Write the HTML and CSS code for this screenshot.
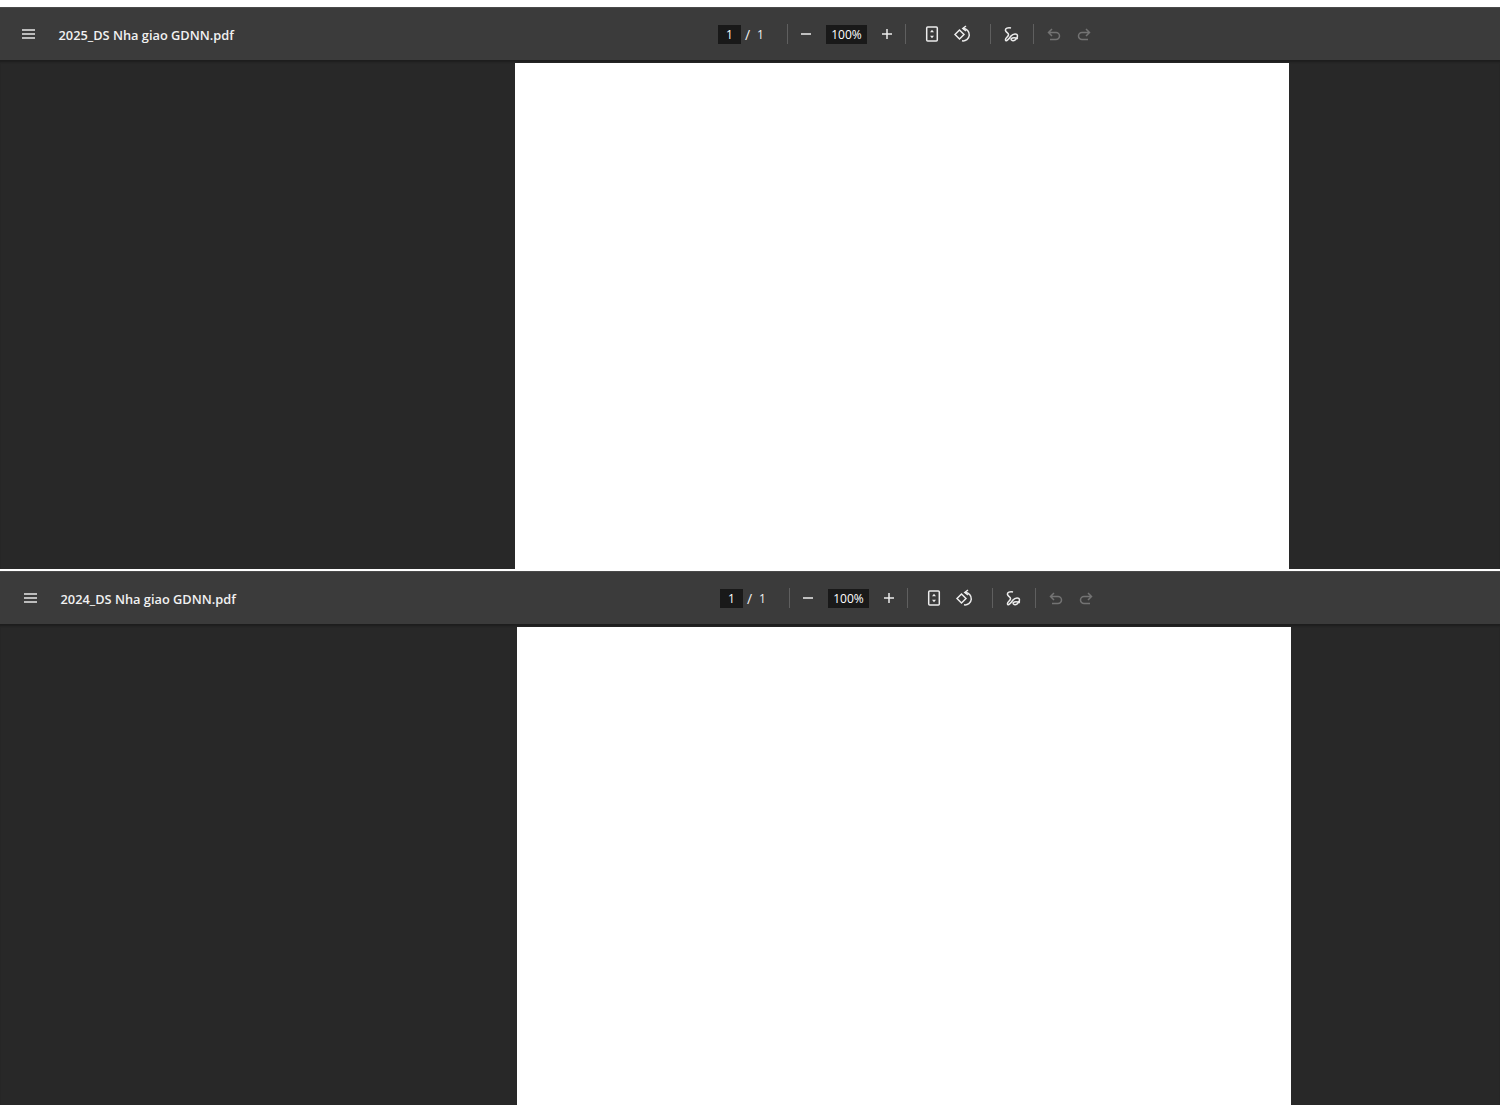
FILE: index.html
```html
<!DOCTYPE html>
<html lang="en">
<head>
    <meta charset="UTF-8">
    <title>PDF viewers</title>
    <link rel="stylesheet" href="styles.css">
</head>
<body>
    <!-- First document -->
    <section class="viewer viewer-first">
        <div class="toolbar">
            <div class="toolbar-left">
                <svg class="menu-icon" viewBox="0 0 14 10" preserveAspectRatio="none"><path d="M0 1h14M0 5h14M0 9h14"/></svg>
                <span class="doc-title">2025_DS Nha giao GDNN.pdf</span>
            </div>
            <div class="toolbar-center">
                <span class="num-box page-box">1</span>
                <span class="slash">/</span>
                <span class="page-total">1</span>
                <span class="sep sep-page"></span>
                <svg class="icon icon-minus" viewBox="0 0 20 20"><path d="M5 10h10"/></svg>
                <span class="num-box zoom-box">100%</span>
                <svg class="icon icon-plus" viewBox="0 0 20 20"><path d="M5 10h10M10 5v10"/></svg>
                <span class="sep sep-zoom"></span>
                <svg class="icon icon-fit" viewBox="0 0 20 20"><rect x="4.700" y="3" width="10.600" height="14" rx="1"/><path class="fill" d="M10 5.800l2 2.400H8zM10 14.200l-2-2.400h4z"/></svg>
                <svg class="icon icon-rotate" viewBox="0 0 20 20"><path d="M6.500 6L11 10.500 6.500 15 2 10.500z"/><path d="M10 4.500a6.200 6.200 0 1 1-1 12.300"/><path d="M13 2L9.800 4.500 13 7"/></svg>
                <span class="sep sep-rotate"></span>
                <svg class="icon icon-draw" viewBox="0 0 20 20"><path d="M11 4C8 3 5 4.500 5.500 6.500 6 8.500 9 9 8.500 11 8 13 5 14 5.500 16 6 18 9 15 11 12c2-2.500 6.500-3 6.500 0 0 3-4 6-6 4-1.500-2 2-3 6.500-1.500"/></svg>
                <span class="sep sep-draw"></span>
                <svg class="icon icon-undo" viewBox="0 0 20 20"><path d="M8 5L4.500 8.500 8 12M4.500 8.500H12a3.500 3.500 0 0 1 0 7H6"/></svg>
                <svg class="icon icon-redo" viewBox="0 0 20 20"><path d="M12 5l3.500 3.500L12 12M15.500 8.500H8a3.500 3.500 0 0 0 0 7h6"/></svg>
            </div>
        </div>
        <div class="stage"><div class="page"></div></div>
    </section>

    <!-- Second document -->
    <section class="viewer viewer-second">
        <div class="toolbar">
            <div class="toolbar-left">
                <svg class="menu-icon" viewBox="0 0 14 10" preserveAspectRatio="none"><path d="M0 1h14M0 5h14M0 9h14"/></svg>
                <span class="doc-title">2024_DS Nha giao GDNN.pdf</span>
            </div>
            <div class="toolbar-center">
                <span class="num-box page-box">1</span>
                <span class="slash">/</span>
                <span class="page-total">1</span>
                <span class="sep sep-page"></span>
                <svg class="icon icon-minus" viewBox="0 0 20 20"><path d="M5 10h10"/></svg>
                <span class="num-box zoom-box">100%</span>
                <svg class="icon icon-plus" viewBox="0 0 20 20"><path d="M5 10h10M10 5v10"/></svg>
                <span class="sep sep-zoom"></span>
                <svg class="icon icon-fit" viewBox="0 0 20 20"><rect x="4.700" y="3" width="10.600" height="14" rx="1"/><path class="fill" d="M10 5.800l2 2.400H8zM10 14.200l-2-2.400h4z"/></svg>
                <svg class="icon icon-rotate" viewBox="0 0 20 20"><path d="M6.500 6L11 10.500 6.500 15 2 10.500z"/><path d="M10 4.500a6.200 6.200 0 1 1-1 12.300"/><path d="M13 2L9.800 4.500 13 7"/></svg>
                <span class="sep sep-rotate"></span>
                <svg class="icon icon-draw" viewBox="0 0 20 20"><path d="M11 4C8 3 5 4.500 5.500 6.500 6 8.500 9 9 8.500 11 8 13 5 14 5.500 16 6 18 9 15 11 12c2-2.500 6.500-3 6.500 0 0 3-4 6-6 4-1.500-2 2-3 6.500-1.500"/></svg>
                <span class="sep sep-draw"></span>
                <svg class="icon icon-undo" viewBox="0 0 20 20"><path d="M8 5L4.500 8.500 8 12M4.500 8.500H12a3.500 3.500 0 0 1 0 7H6"/></svg>
                <svg class="icon icon-redo" viewBox="0 0 20 20"><path d="M12 5l3.500 3.500L12 12M15.500 8.500H8a3.500 3.500 0 0 0 0 7h6"/></svg>
            </div>
        </div>
        <div class="stage"><div class="page"></div></div>
    </section>
</body>
</html>
```

FILE: styles.css
```css
* {
    margin: 0;
    padding: 0;
    box-sizing: border-box;
}

body {
    width: 1500px;
    height: 1105px;
    padding-top: 7px;
    overflow: hidden;
    background-color: #fff;
    font-family: "Open Sans", "Noto Sans", sans-serif;
    color: #f1f1f1;
}

.viewer {
    display: flex;
    flex-direction: column;
    overflow: hidden;
}

.viewer-first {
    height: 562px;
    --shift: 0px;
}

.viewer-second {
    height: 534px;
    margin-top: 2px;
    --shift: 2px;
}

/* Toolbar */
.toolbar {
    flex: none;
    display: flex;
    align-items: center;
    height: 53px;
    padding-left: var(--shift);
    background-color: #3b3b3b;
    border-top: 1px solid #4a4a4a;
}

.toolbar-left {
    flex: none;
    display: flex;
    align-items: center;
    width: 718px;
    padding-left: 22px;
}

.menu-icon {
    width: 13px;
    height: 10px;
    margin-right: 23.5px;
    fill: none;
    stroke: #e8e8e8;
    stroke-width: 1.4;
}

.doc-title {
    margin-top: 1px;
    font-size: 12.8px;
    font-weight: 600;
    white-space: nowrap;
}

.toolbar-center {
    display: flex;
    align-items: center;
    font-size: 12px;
}

.num-box {
    display: flex;
    align-items: center;
    justify-content: center;
    height: 19px;
    background-color: #191919;
    color: #fff;
}

.page-box {
    width: 23px;
}

.zoom-box {
    width: 41px;
    margin: 0 10px 0 10px;
}

.slash {
    width: 5px;
    margin-left: 4px;
    font-size: 14px;
}

.page-total {
    width: 7px;
    margin-left: 7px;
}

.sep {
    width: 1px;
    height: 20px;
    background-color: #5f5f5f;
}

.sep-page {
    margin: 0 8px 0 23px;
}

.sep-zoom {
    margin: 0 16px 0 8px;
}

.sep-rotate {
    margin: 0 9px 0 17px;
}

.sep-draw {
    margin: 0 10px 0 13px;
}

/* Icons */
.icon {
    flex: none;
    width: 20px;
    height: 20px;
    fill: none;
    stroke: #ececec;
    stroke-width: 1.5;
}

.icon .fill {
    fill: #ececec;
    stroke: none;
}

.icon-rotate {
    margin-left: 11px;
}

.icon-undo,
.icon-redo {
    stroke: #737373;
}

.icon-redo {
    margin-left: 10px;
}

/* Document area */
.stage {
    flex: 1;
    min-height: 0;
    padding: 3px 0 0 calc(515px + var(--shift));
    background-color: #282828;
    box-shadow: inset 0 3px 2px -1px #1d1d1d;
}

.page {
    width: 774px;
    height: 100%;
    background-color: #fff;
}
```
